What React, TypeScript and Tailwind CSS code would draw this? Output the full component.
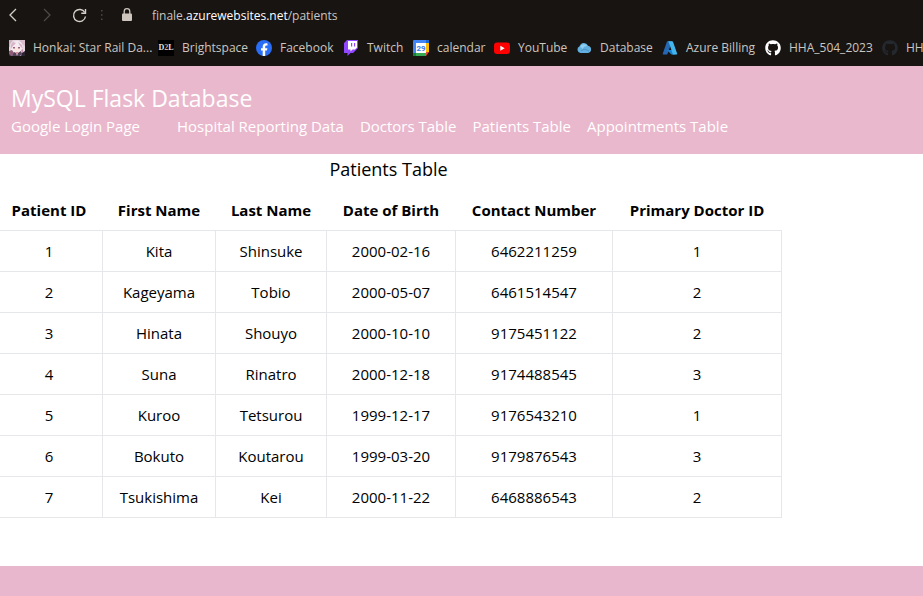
import type { ReactNode } from "react";
import { FaGithub } from "react-icons/fa";

type Bookmark = { label: string; icon: ReactNode; width: string };

function StarRailIcon() {
  return (
    <svg viewBox="0 0 16 16" className="size-4 shrink-0" aria-hidden="true">
      <rect width="16" height="16" fill="#e6d6de" />
      <path d="M0 0h4L1 4v3H0z" fill="#c8b4c0" />
      <path d="M10 0h6v6l-2-1z" fill="#d9bccb" />
      <path d="M2 6Q4 1 8 1t6 5v6H2z" fill="#f4eaf0" />
      <path d="M4 2l3 1-3 3-2 3V5zM9 2l4 3 1 4-3-3z" fill="#d8b2c8" />
      <path d="M5 7h6v3l-3 2-3-2z" fill="#fbe5df" />
      <path d="M4 7h2v1.500H4zM9 7h2v1.500H9z" fill="#a0607f" />
      <path d="M0 11l3-1 2 3-2 3H0z" fill="#8f5d77" />
      <path d="M5 12l2 1 1 3H3zM9 13l3-2 1 3-2 2H8z" fill="#54415a" />
      <path d="M12 10l2-1v5z" fill="#c692ac" />
      <path d="M13 13l3-2v5h-4z" fill="#2c2430" />
      <path d="M0 14l2 2H0z" fill="#2c2430" />
      <path d="M7 12h2v2H7z" fill="#d98c9b" />
    </svg>
  );
}

function BrightspaceIcon() {
  return (
    <span className="flex size-4 shrink-0 items-center justify-center overflow-hidden bg-black font-['Liberation_Serif',serif] text-[8px] font-bold text-[#e6e6e6]" aria-hidden="true">
      D<span className="text-[#dca78a]">2</span>L
    </span>
  );
}

function FacebookIcon() {
  return (
    <svg viewBox="0 0 16 16" className="size-4 shrink-0" aria-hidden="true">
      <circle cx="8" cy="8" r="8" fill="#2a6df6" />
      <path d="M6.700 15.900v-5.300H5V8.200h1.700V7c0-2.500 1.100-3.700 3.400-3.700.5 0 1.100.1 1.400.2v2.100h-.8c-1.100 0-1.500.4-1.500 1.500v1.100h2.200l-.4 2.400H9.200v5.300a8 8 0 0 1-2.500 0z" fill="#fff" />
    </svg>
  );
}

function TwitchIcon() {
  return (
    <svg viewBox="0 0 16 16" className="size-4 shrink-0" aria-hidden="true">
      <path d="M4 0 1 3v10h3.500v3l3-3H10l5-5V0z" fill="#9146ff" />
      <path d="M5 1h9v6.500L12 9.500H9.500L7.500 11.500v-2H5z" fill="#fff" />
      <path d="M8 3h1.200v3.500H8zM11 3h1.200v3.500H11z" fill="#9146ff" />
    </svg>
  );
}

function CalendarIcon() {
  return (
    <svg viewBox="0 0 16 16" className="size-4 shrink-0" aria-hidden="true">
      <path d="M1 0h14a1 1 0 0 1 1 1v3H4v12H1a1 1 0 0 1-1-1V1a1 1 0 0 1 1-1z" fill="#4285f4" />
      <path d="M13 3h3v9h-3z" fill="#fbbc04" />
      <path d="M3 13h10v3H3z" fill="#34a853" />
      <path d="M0 13h3v3H1a1 1 0 0 1-1-1z" fill="#188038" />
      <path d="M13 12h3l-3 4z" fill="#ea4335" />
      <path d="M13 0h2a1 1 0 0 1 1 1v2h-3z" fill="#1967d2" />
      <path d="M3 3h10v10H3z" fill="#fff" />
      <text x="8" y="11" textAnchor="middle" fontSize="8" fontWeight="700" fontFamily="Roboto, sans-serif" fill="#3f7ae8">29</text>
    </svg>
  );
}

function YouTubeIcon() {
  return (
    <svg viewBox="0 0 16 16" className="size-4 shrink-0" aria-hidden="true">
      <rect y="2.500" width="16" height="11.500" rx="3" fill="#f00" />
      <path d="M6.300 5.800v5l4.400-2.500z" fill="#fff" />
    </svg>
  );
}

function CloudIcon() {
  return (
    <svg viewBox="0 0 16 16" className="size-4 shrink-0" aria-hidden="true">
      <path d="M4.500 13A3.500 3.500 0 0 1 3.600 6.300 4.500 4.500 0 0 1 12 5.700 3.700 3.700 0 0 1 12 13z" fill="#62b0df" />
      <path d="M4 7a4.200 4.200 0 0 1 7.600-.8Q8 5.500 6.500 9 5.500 7 4 7z" fill="#8fd0f2" />
      <path d="M5 11q3-3 6-1l2 1" stroke="#4a95c8" fill="none" />
    </svg>
  );
}

function AzureIcon() {
  return (
    <svg viewBox="0 0 16 16" className="size-4 shrink-0" aria-hidden="true">
      <path d="M5.600 1.200h4.500L5.400 14a1 1 0 0 1-.8.600H1.600a.8.8 0 0 1-.8-1.100L4.900 1.800a.8.8 0 0 1 .7-.6z" fill="#2468b4" />
      <path d="M11.700 10H4.800l4.600 4.600h4z" fill="#1b7fd0" />
      <path d="M10 1.200H5.700c.4 0 .7.200.9.600l4 11.700a.8.800 0 0 1-.8 1.100h4.500a.8.800 0 0 0 .8-1.100L11 1.800a1 1 0 0 0-1-.6z" fill="#42b5ed" />
    </svg>
  );
}

const bookmarks: Bookmark[] = [
  { label: "Honkai: Star Rail Da...", icon: <StarRailIcon />, width: "w-[149px]" },
  { label: "Brightspace", icon: <BrightspaceIcon />, width: "w-[98px]" },
  { label: "Facebook", icon: <FacebookIcon />, width: "w-[87px]" },
  { label: "Twitch", icon: <TwitchIcon />, width: "w-[70px]" },
  { label: "calendar", icon: <CalendarIcon />, width: "w-[81px]" },
  { label: "YouTube", icon: <YouTubeIcon />, width: "w-[82px]" },
  { label: "Database", icon: <CloudIcon />, width: "w-[86px]" },
  { label: "Azure Billing", icon: <AzureIcon />, width: "w-[103px]" },
  { label: "HHA_504_2023", icon: <FaGithub className="size-4 shrink-0 text-white" />, width: "w-[117px]" },
  { label: "HH", icon: <FaGithub className="size-4 shrink-0 text-[#24292f]" />, width: "w-auto" },
];

const links = ["Hospital Reporting Data", "Doctors Table", "Patients Table", "Appointments Table"];

const columns = [
  { name: "Patient ID", width: "w-[107px]" },
  { name: "First Name", width: "w-[113px]" },
  { name: "Last Name", width: "w-[111px]" },
  { name: "Date of Birth", width: "w-[129px]" },
  { name: "Contact Number", width: "w-[157px]" },
  { name: "Primary Doctor ID", width: "w-[169px]" },
];

const patients = [
  ["1", "Kita", "Shinsuke", "2000-02-16", "6462211259", "1"],
  ["2", "Kageyama", "Tobio", "2000-05-07", "6461514547", "2"],
  ["3", "Hinata", "Shouyo", "2000-10-10", "9175451122", "2"],
  ["4", "Suna", "Rinatro", "2000-12-18", "9174488545", "3"],
  ["5", "Kuroo", "Tetsurou", "1999-12-17", "9176543210", "1"],
  ["6", "Bokuto", "Koutarou", "1999-03-20", "9179876543", "3"],
  ["7", "Tsukishima", "Kei", "2000-11-22", "6468886543", "2"],
];

function BrowserBar() {
  return (
    <header className="overflow-hidden bg-[#181411] text-xs text-[#cbc6c0]">
      <div className="flex h-8 items-center pl-1">
        <button type="button" aria-label="Back" className="flex w-[18px] justify-center">
          <svg viewBox="0 0 16 16" className="size-4" fill="none" stroke="#d5d0ca" strokeWidth="1.300"><path d="M11 1 5 7l6 6" /></svg>
        </button>
        <button type="button" aria-label="Forward" className="ml-4 flex w-[18px] justify-center">
          <svg viewBox="0 0 16 16" className="size-4" fill="none" stroke="#4d4945" strokeWidth="1.300"><path d="m5 1 6 6-6 6" /></svg>
        </button>
        <button type="button" aria-label="Reload" className="ml-4 flex w-4">
          <svg viewBox="0 0 16 16" className="size-4" fill="none" stroke="#d5d0ca" strokeWidth="1.400"><path d="M12.800 4.500A6 6 0 1 0 13.500 8.500" /><path d="M13.500 1v4.200H9.300" /></svg>
        </button>
        <svg viewBox="0 0 4 16" className="ml-3 h-4 w-1" fill="#4d4945" aria-hidden="true"><path d="M1 2h1.500v1.500H1zM1 6.200h1.500v1.500H1zM1 10.500h1.500V12H1z" /></svg>
        <svg viewBox="0 0 16 16" className="ml-[15px] size-4" aria-hidden="true"><rect x="3" y="5.500" width="10" height="7.500" rx="1" fill="#cfc5bf" /><path d="M5.200 6V3.500a2.800 2.800 0 0 1 5.600 0V6" fill="none" stroke="#cfc5bf" strokeWidth="1.300" /></svg>
        <button type="button" aria-label="Address" className="ml-[17px] text-left">
          finale.<span className="text-white">azurewebsites.net</span>/patients
        </button>
      </div>
      <nav aria-label="Bookmarks" className="flex h-[34px] items-center pb-0.5 pl-[9px]">
        {bookmarks.map((b) => (
          <a key={b.label} href="#" className={`flex shrink-0 items-center gap-2 whitespace-nowrap ${b.width}`}>
            {b.icon}
            {b.label}
          </a>
        ))}
      </nav>
    </header>
  );
}

export default function App() {
  return (
    <div className="flex min-h-screen flex-col overflow-x-hidden bg-white font-['Open_Sans','Noto_Sans',sans-serif] text-[15px] leading-6 text-black">
      <BrowserBar />
      <nav aria-label="Main" className="bg-[#eab8cd] px-[11px] pt-[18px] pb-4 text-white">
        <h1 className="pb-0.5 text-[23px] leading-7">MySQL Flask Database</h1>
        <div className="flex whitespace-nowrap">
          <a href="#" className="mr-[37px]">Google Login Page</a>
          <div className="flex gap-4">
            {links.map((l) => (
              <a key={l} href="#">{l}</a>
            ))}
          </div>
        </div>
      </nav>
      <main className="pb-12">
        <table className="-ml-[5px] table-fixed border-collapse text-center">
          <caption className="h-9 pt-px text-lg leading-7">Patients Table</caption>
          <thead>
            <tr className="h-10">
              {columns.map((c) => (
                <th key={c.name} scope="col" className={`whitespace-nowrap font-bold ${c.width}`}>{c.name}</th>
              ))}
            </tr>
          </thead>
          <tbody>
            {patients.map((row) => (
              <tr key={row[0]}>
                {row.map((cell, i) => (
                  <td key={i} className="border border-gray-200 py-2">{cell}</td>
                ))}
              </tr>
            ))}
          </tbody>
        </table>
      </main>
      <footer className="flex-1 bg-[#e8b7cd]" />
    </div>
  );
}
